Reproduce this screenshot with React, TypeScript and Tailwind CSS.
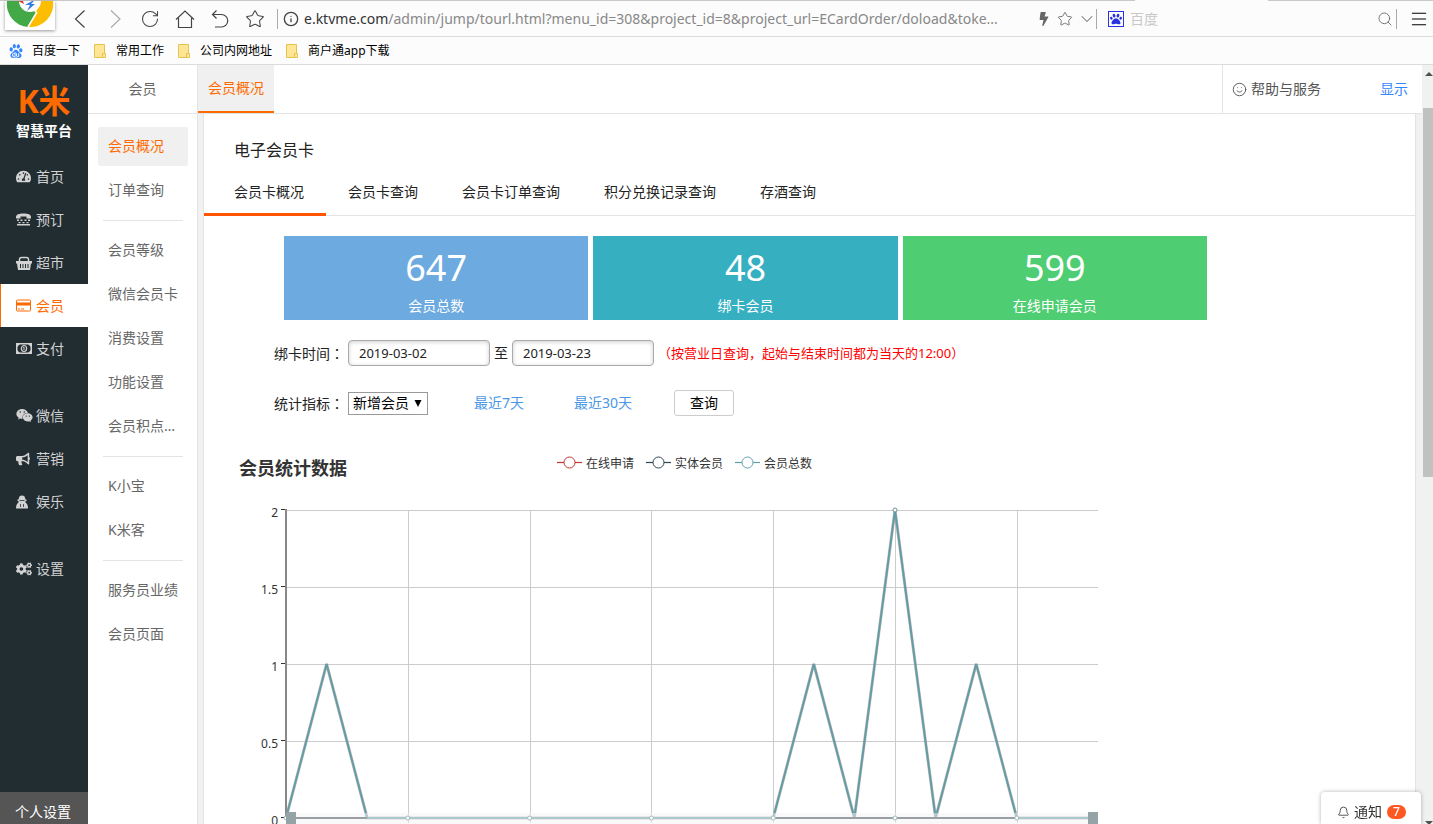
import React, { useState } from 'react';
import {
  Bell,
  ChevronDown,
  Info,
  Menu,
  RotateCw,
  Search,
  Smile,
  Star,
} from 'lucide-react';
import {
  FaBolt,
  FaBullhorn,
  FaCogs,
  FaPaw,
  FaTachometerAlt,
  FaWeixin,
} from 'react-icons/fa';
import { SiBaidu } from 'react-icons/si';
import { clsx } from 'clsx';

const BOOKMARKS = ['常用工作', '公司内网地址', '商户通app下载'];

const NAV_GROUPS = [
  [
    { name: '首页', icon: <FaTachometerAlt className="size-[15px]" /> },
    { name: '预订', icon: <PhoneIcon /> },
    { name: '超市', icon: <BasketIcon /> },
    { name: '会员', icon: <CardIcon /> },
    { name: '支付', icon: <MoneyIcon /> },
  ],
  [
    { name: '微信', icon: <FaWeixin className="size-[17px]" /> },
    { name: '营销', icon: <FaBullhorn className="size-[14px]" /> },
    { name: '娱乐', icon: <HostIcon /> },
  ],
  [{ name: '设置', icon: <FaCogs className="size-4" /> }],
];

const SUB_GROUPS = [
  ['会员概况', '订单查询'],
  ['会员等级', '微信会员卡', '消费设置', '功能设置', '会员积点…'],
  ['K小宝', 'K米客'],
  ['服务员业绩', '会员页面'],
];

const CARD_TABS = ['会员卡概况', '会员卡查询', '会员卡订单查询', '积分兑换记录查询', '存酒查询'];

const STATS = [
  { value: 647, label: '会员总数', color: 'bg-[#6caadf]' },
  { value: 48, label: '绑卡会员', color: 'bg-[#36b0c1]' },
  { value: 599, label: '在线申请会员', color: 'bg-[#4fcd72]' },
];

const LEGEND = [
  { label: '在线申请', color: '#c23531' },
  { label: '实体会员', color: '#2f4554' },
  { label: '会员总数', color: '#61a0a8' },
];

// one value per day, 2019-03-02 to 2019-03-22
const SERIES = [0, 1, 0, 0, 0, 0, 0, 0, 0, 0, 0, 0, 0, 1, 0, 2, 0, 1, 0, 0, 0];

export default function App() {
  return (
    <div className="flex h-screen flex-col overflow-hidden bg-white font-['Noto_Sans','Noto_Sans_CJK_SC',sans-serif] text-sm text-[#222]">
      <BrowserBar />
      <div className="flex min-h-0 flex-1">
        <MainNav />
        <SubNav />
        <div className="flex min-w-0 flex-1 flex-col">
          <header className="flex h-[49px] shrink-0 border-b border-[#e4e4e4]">
            <a href="#overview" className="flex h-12 items-center border-b-2 border-[#ff6a00] bg-[#f0f0f0] px-[10px] text-[#ff6a00]">
              会员概况
            </a>
            <div className="ml-auto flex w-[200px] items-center border-l border-[#e4e4e4] pr-[14px] pl-[9px]">
              <a href="#help" className="flex items-center gap-1 text-[#555]">
                <Smile className="size-[15px]" strokeWidth={1.5} />
                帮助与服务
              </a>
              <a href="#show" className="ml-auto text-[#3385ff]">显示</a>
            </div>
          </header>
          <div className="flex min-h-0 flex-1 bg-[#f1f1f1] pr-[6px] pl-[5px]">
            <MemberPanel />
          </div>
        </div>
        <Scrollbar />
      </div>
      <a
        href="#notice"
        className="fixed right-3 bottom-0 flex h-8 w-[100px] items-center gap-1 rounded-t-sm bg-white pt-2 pl-4 text-[#333] shadow-[0_0_4px_rgba(0,0,0,0.3)]"
      >
        <Bell className="size-[13px]" strokeWidth={1.5} />
        通知
        <span className="ml-px flex h-[14px] w-[19px] items-center justify-center rounded-full bg-[#ff5722] text-xs font-medium text-white">7</span>
      </a>
    </div>
  );
}

function BrowserBar() {
  return (
    <div className="shrink-0 bg-[#fcfcfc]">
      <div className="flex h-px">
        <div className="flex-1 bg-[#c9c9c9]" />
        <div className="w-[133px]" />
        <div className="w-[165px] bg-[#c9c9c9]" />
      </div>
      <div className="flex h-9 items-center border-b border-[#dcdcdc] text-[#444]">
        <div className="mr-[15px] ml-[5px] h-[29px] w-[50px] shrink-0 self-start bg-white shadow-[0_1px_3px_rgba(0,0,0,0.4)]">
          <svg viewBox="0 0 50 29" className="h-[29px] w-[50px]">
            <path d="M2 0a23 23 0 0 0 21 26l8-14L20 0z" fill="#43a947" />
            <path d="M48 0a23 23 0 0 1-25 26l9-17L34 0z" fill="#fdbd00" />
            <path d="M32 11l-9 15" stroke="#fff" strokeWidth="1.5" />
            <path d="M14 0h22a11 11 0 0 1-22 0z" fill="#fff" />
            <path d="M13 0h5l1 3z" fill="#e33b2e" />
            <path d="M27 0l-7 4h5l-3 6 8-7h-4l3-3z" fill="#2f7de1" />
          </svg>
        </div>
        <div className="flex items-center gap-[15px]">
          <button aria-label="后退"><ToolIcon d="M14.500 1.500L5.500 10l9 8.500" /></button>
          <button aria-label="前进" className="text-[#aaa]"><ToolIcon d="M6 1.500l9 8.500-9 8.500" /></button>
          <button aria-label="刷新"><RotateCw className="size-5" strokeWidth={1.25} /></button>
          <button aria-label="主页"><ToolIcon d="M1 10.500L10 2l9 8.500M3.500 9v9.500h13V9" /></button>
          <button aria-label="恢复"><ToolIcon d="M6.500 1.500l-4 4 4 4M2.500 5.500h9a6 6 0 0 1 0 12.500H5" /></button>
          <button aria-label="收藏"><Star className="size-5" strokeWidth={1.25} /></button>
        </div>
        <div className="mr-[5px] ml-3 h-5 w-px bg-[#aaa]" />
        <Info className="mr-[5px] size-4 shrink-0" strokeWidth={2} />
        <div className="min-w-0 flex-1 truncate text-[#888]">
          <span className="text-[#333]">e.ktvme.com</span>
          /admin/jump/tourl.html?menu_id=308&amp;project_id=8&amp;project_url=ECardOrder/doload&amp;toke...
        </div>
        <FaBolt className="mr-[6px] size-[14px] text-[#666]" />
        <button aria-label="添加收藏"><Star className="mr-[6px] size-4 text-[#777]" strokeWidth={1.5} /></button>
        <button aria-label="展开"><ChevronDown className="size-4 scale-125 text-[#777]" strokeWidth={1.25} /></button>
        <div className="mr-[11px] ml-px h-5 w-px bg-[#aaa]" />
        <div className="flex size-4 items-center justify-center border border-[#2932e1]">
          <FaPaw className="size-3 text-[#2932e1]" />
        </div>
        <input
          aria-label="搜索"
          placeholder="百度"
          className="ml-[6px] w-[247px] bg-transparent outline-none placeholder:text-[#c8c8c8]"
        />
        <button aria-label="搜索"><Search className="size-4 text-[#777]" strokeWidth={1.5} /></button>
        <div className="mr-3 ml-[3px] h-5 w-px bg-[#aaa]" />
        <button aria-label="菜单"><Menu className="mr-1 size-5 text-black" strokeWidth={1.25} /></button>
      </div>
      <div className="flex h-7 items-center gap-[14px] border-b border-[#dcdcdc] pl-[9px] text-xs text-black">
        <a href="#baidu" className="flex items-center gap-[9px]">
          <SiBaidu className="size-[14px] text-[#3385ff]" />
          百度一下
        </a>
        {BOOKMARKS.map(name => (
          <a key={name} href="#bookmark" className="flex items-center gap-[10px]">
            <svg viewBox="0 0 12 14" className="h-[14px] w-3">
              <path d="M.5.5h10v9h1v4H.5z" fill="#ffe694" stroke="#e6c350" />
              <path d="M8.500 13v-3.500h2" fill="none" stroke="#e6c350" />
            </svg>
            {name}
          </a>
        ))}
      </div>
    </div>
  );
}

function ToolIcon({ d }: { d: string }) {
  return (
    <svg viewBox="0 0 20 20" className="size-5" fill="none" stroke="currentColor" strokeWidth="1.200">
      <path d={d} />
    </svg>
  );
}

function MainNav() {
  const [active, setActive] = useState('会员');

  return (
    <nav className="flex w-[88px] shrink-0 flex-col bg-[#222d32] text-[#d2d2d2]">
      <div className="flex h-[90px] shrink-0 flex-col items-center pt-[18px]">
        <span className="text-[32px] leading-9 font-bold text-[#ff6a00]">K米</span>
        <span className="text-sm leading-6 font-bold text-white">智慧平台</span>
      </div>
      <div className="flex flex-col gap-6">
        {NAV_GROUPS.map((group, i) => (
          <div key={i}>
            {group.map(item => (
              <button
                key={item.name}
                onClick={() => setActive(item.name)}
                className={clsx(
                  'flex h-[43px] w-full items-center border-l pl-[15px]',
                  active === item.name ? 'border-[#ff6a00] bg-white text-[#ff6a00]' : 'border-transparent'
                )}
              >
                <span className="w-5">{item.icon}</span>
                {item.name}
              </button>
            ))}
          </div>
        ))}
      </div>
      <a href="#profile" className="mt-auto flex h-8 shrink-0 items-center bg-[#555] pt-2 pl-[15px] text-white">
        个人设置
      </a>
    </nav>
  );
}

function SubNav() {
  const [active, setActive] = useState('会员概况');

  return (
    <nav className="w-[110px] shrink-0 border-r border-[#e4e4e4] text-[#666]">
      <h2 className="flex h-[49px] items-center justify-center border-b border-[#e4e4e4]">会员</h2>
      <div className="pt-[13px] pr-[9px] pl-[10px]">
        {SUB_GROUPS.map((group, i) => (
          <div
            key={i}
            className={clsx(
              'flex flex-col gap-[5px]',
              i > 0 && "before:mx-[5px] before:mt-[10px] before:mb-[5px] before:h-px before:bg-[#e4e4e4] before:content-['']"
            )}
          >
            {group.map(name => (
              <button
                key={name}
                onClick={() => setActive(name)}
                className={clsx(
                  'h-[39px] rounded-xs pb-[2px] pl-[10px] text-left whitespace-nowrap',
                  active === name && 'bg-[#f0f0f0] text-[#ff6a00]'
                )}
              >
                {name}
              </button>
            ))}
          </div>
        ))}
      </div>
    </nav>
  );
}

function MemberPanel() {
  const [tab, setTab] = useState(CARD_TABS[0]);

  return (
    <main className="min-w-0 flex-1 overflow-hidden border-x border-[#e4e4e4] bg-white">
      <h1 className="pt-6 pl-[30px] text-base leading-6">电子会员卡</h1>
      <div className="mt-2 flex h-[46px] border-b border-[#e4e4e4]">
        {CARD_TABS.map((name, i) => (
          <button
            key={name}
            onClick={() => setTab(name)}
            className={clsx(
              'h-[46px] border-b-3 pt-px pr-[22px]',
              i === 0 ? 'pl-[30px]' : 'pl-[22px]',
              tab === name ? 'border-[#ff5500]' : 'border-transparent'
            )}
          >
            {name}
          </button>
        ))}
      </div>

      <div className="mt-5 mr-52 ml-20 grid grid-cols-3 gap-[5px]">
        {STATS.map(stat => (
          <div key={stat.label} className={clsx('flex h-[84px] flex-col items-center pt-2 text-white', stat.color)}>
            <span className="text-4xl leading-12">{stat.value}</span>
            <span className="leading-7">{stat.label}</span>
          </div>
        ))}
      </div>

      <form className="mt-5 ml-[70px]" onSubmit={e => e.preventDefault()}>
        <div className="flex h-[26px] items-center gap-1">
          <label htmlFor="start" className="w-[70px]">绑卡时间<Colon /></label>
          <DateInput id="start" value="2019-03-02" />
          <label htmlFor="end">至</label>
          <DateInput id="end" value="2019-03-23" />
          <span className="text-[13px] text-[#f00]">（按营业日查询，起始与结束时间都为当天的12:00）</span>
        </div>
        <div className="mt-6 flex h-[26px] items-center">
          <label htmlFor="metric" className="mr-1 w-[70px]">统计指标<Colon /></label>
          <div className="relative mr-[46px]">
            <select id="metric" className="block h-[23px] w-20 appearance-none border border-[#999] bg-white pl-1 leading-5 text-black">
              <option>新增会员</option>
            </select>
            <svg viewBox="0 0 8 7" className="pointer-events-none absolute top-2 right-[6px] h-[7px] w-2">
              <path d="M0.500 0h7L4 7z" fill="#000" />
            </svg>
          </div>
          <button type="button" className="w-[100px] text-left text-[#4a97e6]">最近7天</button>
          <button type="button" className="w-[100px] text-left text-[#4a97e6]">最近30天</button>
          <button className="h-[26px] w-[60px] rounded-[3px] border border-[#ccc] text-black">查询</button>
        </div>
      </form>

      <div className="mt-9 ml-[35px] flex h-8">
        <h2 className="text-lg leading-8 font-bold text-[#333]">会员统计数据</h2>
        <ul className="ml-[210px] flex gap-3 text-xs text-[#333]">
          {LEGEND.map(item => (
            <li key={item.label} className="flex h-6 items-center gap-1">
              <svg viewBox="0 0 25 18" className="h-[18px] w-[25px]">
                <path d="M0 7.500h25" stroke={item.color} strokeWidth="1.200" />
                <circle cx="12.500" cy="7.500" r="5.500" fill="#fff" stroke={item.color} />
              </svg>
              {item.label}
            </li>
          ))}
        </ul>
      </div>
      <MemberChart />
    </main>
  );
}

function Colon() {
  return <span className="font-['Noto_Sans_CJK_TC',sans-serif]">：</span>;
}

function DateInput({ id, value }: { id: string, value: string }) {
  return (
    <input
      id={id}
      type="text"
      defaultValue={value}
      className="h-[26px] w-[142px] rounded-[4px] border border-[#aaa] px-[10px] text-[13px] shadow-[inset_0_1px_4px_rgba(0,0,0,0.2)]"
    />
  );
}

function MemberChart() {
  const left = 46;
  const top = 26;
  const width = 812;
  const height = 308;
  const x = (i: number) => left + (i * width) / (SERIES.length - 1);
  const y = (v: number) => top + height - (v * height) / 2;
  const points = SERIES.map((v, i) => `${x(i)},${y(v)}`).join(' ');
  const days = [0, 3, 6, 9, 12, 15, 18];

  return (
    <svg viewBox="0 0 967 360" className="mr-52 ml-9 block w-[calc(100%-244px)]">
      {[0, 0.5, 1, 1.5, 2].map(v => (
        <g key={v}>
          <path d={`M${left} ${y(v) + 0.5}h${width}`} stroke="#ccc" />
          <path d={`M${left - 5} ${y(v) - 0.5}h5`} stroke="#333" />
          <text x={left - 8} y={y(v) + 7} textAnchor="end" fontSize="12" fill="#333">{v}</text>
        </g>
      ))}
      {days.slice(1).map(d => (
        <path key={d} d={`M${Math.round(x(d)) + 0.5} ${top}v${height + 5}`} stroke="#ccc" />
      ))}
      <path d={`M${left} ${top - 1}v${height + 1}`} stroke="#888" strokeWidth="2" />
      <path d={`M${left} ${y(0)}h${width}`} stroke="#888" strokeWidth="2" />
      <polyline points={points} fill="none" stroke="#b08f8f" strokeWidth="3" strokeOpacity="0.6" strokeLinejoin="bevel" />
      <polyline points={points} fill="none" stroke="#5f9ea6" strokeWidth="2" strokeLinejoin="bevel" />
      <rect x={left} y={top + height - 5} width={width} height="30" fill="#f4f4f4" fillOpacity="0.5" />
      <path d={`M${left} ${y(0)}H${x(2)}M${x(12)} ${y(0)}H${x(18)}`} stroke="#8f959c" strokeWidth="1.5" />
      {days.map(d => (
        <circle key={d} cx={x(d)} cy={y(0)} r="2" fill="#fff" stroke="#9dbcc0" />
      ))}
      <circle cx={x(15)} cy={y(2)} r="2" fill="#fff" stroke="#6f9196" />
      <rect x={left} y={top + height - 6} width="10" height="30" fill="#94a3a5" />
      <rect x={left + width - 10} y={top + height - 6} width="10" height="30" fill="#94a3a5" />
    </svg>
  );
}

function Scrollbar() {
  return (
    <div className="flex w-[11px] shrink-0 flex-col items-end justify-between bg-[#f1f1f1]">
      <svg viewBox="0 0 10 43" className="h-[43px] w-[10px]">
        <path d="M2 11l4-4 4 4z" fill="#505050" />
      </svg>
      <div className="h-[369px] w-[10px] bg-[#c1c1c1]" />
      <div className="flex-1" />
      <svg viewBox="0 0 10 8" className="h-2 w-[10px]">
        <path d="M2 5h8L6 9z" fill="#505050" />
      </svg>
    </div>
  );
}

function PhoneIcon() {
  return (
    <svg viewBox="0 0 15 13" className="h-[13px] w-[15px]" fill="currentColor">
      <path d="M0 5.500V4C0 1.500 3 .5 7.500.5S15 1.500 15 4v1.500h-4.500V3.500h-6v2z" />
      <path d="M1 6.500h2V8H1zm3.500 0h2V8h-2zm4 0h2V8h-2zm3.500 0h2V8h-2zM2.500 9h2v1.200h-2zm4 0h2v1.200h-2zm4 0h2v1.200h-2zM1 11h13v1.500H1z" />
    </svg>
  );
}

function BasketIcon() {
  return (
    <svg viewBox="0 0 16 14" className="h-[14px] w-4">
      <path d="M3.500 6V3.500q0-2 2-2h5q2 0 2 2V6" fill="none" stroke="currentColor" strokeWidth="1.500" />
      <path d="M0 5h16v2.500h-1L14 14H2L1 7.500H0z" fill="currentColor" />
      <path d="M4.500 8v4M7 8v4M9.500 8v4M12 8v4" stroke="#222d32" />
    </svg>
  );
}

function CardIcon() {
  return (
    <svg viewBox="0 0 15 13" className="h-[13px] w-[15px]">
      <rect x="0.500" y="1" width="14" height="11" rx="1" fill="none" stroke="currentColor" />
      <path d="M0 3.500h15v3H0z" fill="currentColor" />
      <path d="M2 10h2m1 0h3" stroke="currentColor" />
    </svg>
  );
}

function MoneyIcon() {
  return (
    <svg viewBox="0 0 16 11" className="h-[11px] w-4" fill="none" stroke="currentColor">
      <rect x="0.750" y="0.750" width="14.500" height="9.500" strokeWidth="1.500" />
      <path d="M1 1h3L1 4zm14 0h-3l3 3zM1 10h3L1 7zm14 0h-3l3-3z" fill="currentColor" stroke="none" />
      <ellipse cx="8" cy="5.500" rx="2.600" ry="3" strokeWidth="1.200" />
      <path d="M7.200 4.500l.8-.6v3.200" />
    </svg>
  );
}

function HostIcon() {
  return (
    <svg viewBox="0 0 12 14" className="h-[14px] w-3">
      <path d="M3 3q0-2.500 3-2.500T9 3l.5 1.500h1V6H9.500v1.500Q12 9 12 13.500H0Q0 9 2.500 7.500V6h-1V4.500h1z" fill="currentColor" />
      <path d="M3.500 5.500h5M4.500 9v3M7.500 9v3" stroke="#222d32" strokeWidth="0.800" />
    </svg>
  );
}
